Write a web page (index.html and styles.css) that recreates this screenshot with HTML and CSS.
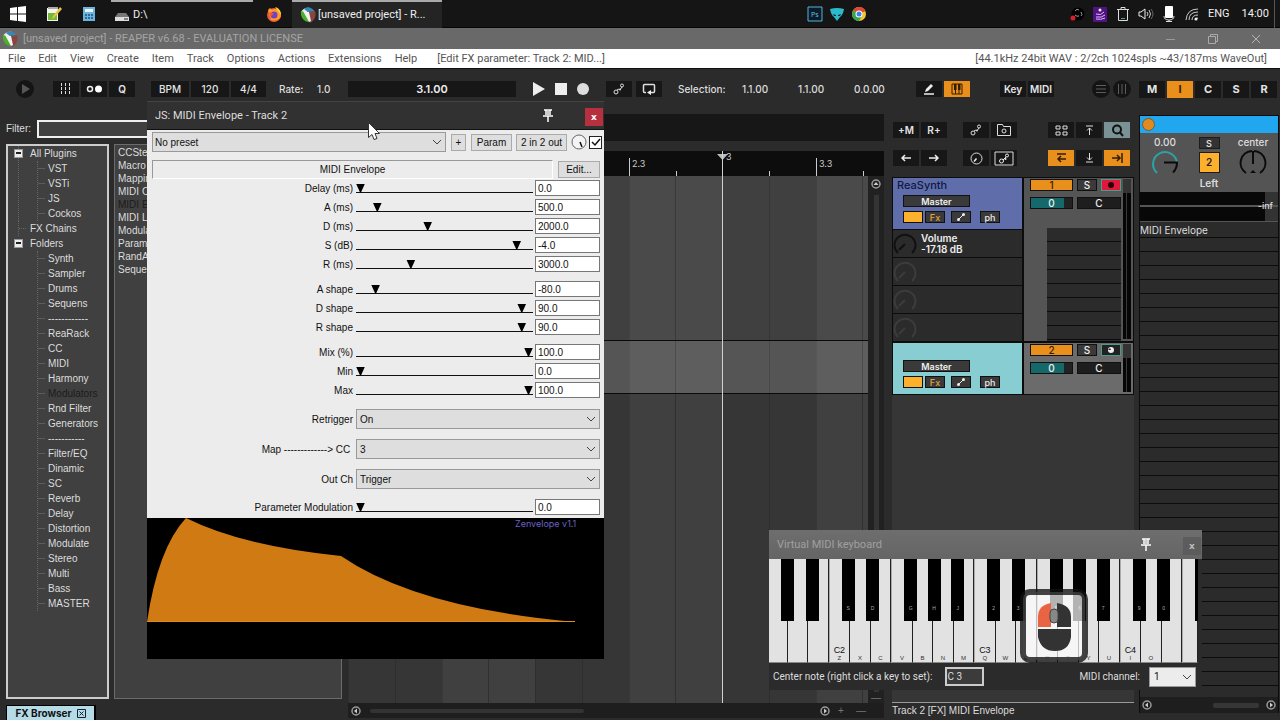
FILE: index.html
```html
<!DOCTYPE html>
<html lang="en">
<head>
<meta charset="utf-8">
<title>[unsaved project] - REAPER v6.68</title>
<link rel="stylesheet" href="styles.css">
</head>
<body>
<svg class="defs" aria-hidden="true">
  <symbol id="reaper" viewBox="0 0 16 16"><path d="M1 5C3 1 7 0 10 1L6 6z" fill="#e9e9e9"/><path d="M4 2c4-3 9-1 11 3L8 5z" fill="#3389b5"/><path d="M1 4l4 1 4 10C4 15 0 10 1 4z" fill="#4caf2c"/><path d="M6 5l9-1c2 5-1 10-5 12z" fill="#8a4440"/><path d="M3 4l6 1 2 9-2 1z" fill="#f2f2f2"/></symbol>
  <symbol id="pin" viewBox="0 0 12 14"><path d="M2 1h8M4 1v5M8 1v5M1 7h10M6 7v6" stroke="#fff" stroke-width="1.500" fill="none"/><path d="M5 2h2v4H5z" fill="#ccc"/></symbol>
  <symbol id="env" viewBox="0 0 12 12"><circle cx="3" cy="9" r="2" fill="none" stroke="#ddd"/><circle cx="9" cy="2.500" r="1.500" fill="none" stroke="#ddd"/><circle cx="7" cy="6.500" r="1" fill="#ddd"/><path d="M4 7l2-1M7.500 6L9 4" stroke="#ddd"/></symbol>
  <symbol id="envsmall" viewBox="0 0 8 8"><path d="M1 7l6-6" stroke="#eee"/><circle cx="1.500" cy="6.500" r="1.500" fill="#eee"/><circle cx="6.500" cy="1.500" r="1.500" fill="#eee"/></symbol>
  <symbol id="knob" viewBox="0 0 24 24"><path d="M5 21A10.500 10.500 0 1 1 19 21M12 12l-6 6" fill="none" stroke="currentColor" stroke-width="2"/></symbol>
  <symbol id="arrow" viewBox="0 0 10 10"><circle cx="5" cy="5" r="4" fill="none" stroke="#999" stroke-width="1.500"/><path d="M6 2.500v5L3 5z" fill="#ccc"/></symbol>
</svg>

<header class="taskbar">
  <svg class="ic win" viewBox="0 0 16 16"><path d="M0 2l7-1v6.500H0zM8 1l8-1v7.500H8zM0 8.500h7V15l-7-1zM8 8.500h8V16l-8-1z" fill="#fff"/></svg>
  <svg class="ic note" viewBox="0 0 16 16"><path d="M1 2h11v13H1z" fill="#f4f4ec"/><path d="M2 7h9v7H2z" fill="#74b83a"/><path d="M2 1h10v2H2z" fill="#aaa"/><path d="M14 1l2 2-8 9-2 1 1-3z" fill="#e3c63c"/></svg>
  <svg class="ic calc" viewBox="0 0 16 16"><path d="M2 1h12v14H2z" fill="#6eb3dc"/><path d="M4 3h8v3H4z" fill="#e6f5ff"/><path d="M4 8h2v2H4zM7 8h2v2H7zM10 8h2v2h-2zM4 11h2v2H4zM7 11h2v2H7zM10 11h2v2h-2z" fill="#2b6c9c"/></svg>
  <button class="task drive"><svg class="ic" viewBox="0 0 16 16"><path d="M4 6h8l3 4v3H1v-3z" fill="#777"/><path d="M1 10h14v4H1z" fill="#ddd"/><path d="M10 12h4" stroke="#222"/></svg>D:\</button>
  <svg class="ic fox" viewBox="0 0 16 16"><circle cx="8" cy="9" r="7" fill="#f3572f"/><path d="M2 4l2-2 2 2c4-3 9 1 9 6-2 5-8 5-10 4z" fill="#ff9b29"/><circle cx="8" cy="9" r="3.500" fill="#7042c4"/><path d="M9 1c4 1 6 4 6 8l-3-4z" fill="#ffd43a"/><path d="M3 7c2-1 4 0 5 1L5 10z" fill="#f3572f"/></svg>
  <button class="task active"><svg class="ic"><use href="#reaper"/></svg>[unsaved project] - R...</button>
  <div class="pinned">
    <svg class="ic" viewBox="0 0 16 16"><path d="M1 1h14v14H1z" fill="#0b1c28" stroke="#55b4dd"/><text x="4" y="11" class="ps">Ps</text></svg>
    <svg class="ic" viewBox="0 0 16 16"><path d="M1 3q7-2 14 0-1 6-4 8l-3 4-3-4Q2 9 1 3z" fill="#2bb9cb"/><path d="M4 8l3 1v1H5zM12 8L9 9v1h2z" fill="#06323a"/></svg>
    <svg class="ic" viewBox="0 0 16 16"><circle cx="8" cy="8" r="7" fill="#f5c52f"/><path d="M8 8L2 4.500A7 7 0 0 1 14.500 5z" fill="#de4735"/><path d="M8 8L2 4.500A7 7 0 0 0 8 15l3-5z" fill="#35a552"/><circle cx="8" cy="8" r="3.500" fill="#fff"/><circle cx="8" cy="8" r="2.500" fill="#3f7fe8"/></svg>
  </div>
  <div class="tray">
    <svg class="ic" viewBox="0 0 16 16"><circle cx="9" cy="8" r="6.500" fill="#000"/><path d="M6 5q2-3 4-1M12 6q2 3 0 4M6 9q2 2 4 1" stroke="#999" fill="none"/><circle cx="4" cy="12" r="2.500" fill="#d4202c"/></svg>
    <svg class="ic" viewBox="0 0 16 16"><path d="M1 1h14v15H1z" fill="#501383"/><path d="M4 8q5 2 8-2M4 11q6 1 9-2M4 13q5 1 9-1" stroke="#e3bdff" fill="none"/><circle cx="8" cy="4" r="1.500" fill="#eee"/></svg>
    <svg class="ic" viewBox="0 0 16 16"><path d="M3.500 3.500h9v11h-9zM2 3.500h12M6 3V1.500h4V3" stroke="#ddd" fill="none"/><path d="M6 12h4v1H6z" fill="#4aa0a0"/></svg>
    <svg class="ic" viewBox="0 0 16 16"><path d="M1 6h2l4-3v10l-4-3H1z" fill="none" stroke="#eee"/><path d="M9 6q2 2 0 4M11 4q3 4 0 8" fill="none" stroke="#ccc"/><path d="M13 3q4 5 0 10" fill="none" stroke="#666"/></svg>
    <svg class="ic" viewBox="0 0 16 16"><rect x="4" y="0" width="8" height="12" rx="1" fill="#fff"/><path d="M3 10q0 4 5 4t5-4M8 14v2M5 15.500h6" stroke="#ddd" fill="none"/></svg>
    <svg class="ic" viewBox="0 0 16 16"><path d="M2 14Q3 3 14 3M5 14q0-8 9-8M8 14q0-5 6-5M11 14q0-2 3-2" stroke="#ccc" fill="none"/><circle cx="12" cy="13" r="1.500" fill="#eee"/></svg>
    <span class="lang">ENG</span><time>14:00</time>
  </div>
</header>

<div class="titlebar">
  <svg class="ic"><use href="#reaper"/></svg>
  <h1>[unsaved project] - REAPER v6.68 - EVALUATION LICENSE</h1>
  <div class="wbtns">
    <button aria-label="Minimize"><svg viewBox="0 0 10 10"><path d="M1 5.500h9" stroke="#999"/></svg></button>
    <button aria-label="Restore"><svg viewBox="0 0 10 10"><path d="M.5 2.500h7v7h-7zM2.500 2.500v-2h7v7h-2" fill="none" stroke="#aaa"/></svg></button>
    <button aria-label="Close"><svg viewBox="0 0 10 10"><path d="M1 1l8 8M9 1L1 9" stroke="#b5b5b5"/></svg></button>
  </div>
</div>

<nav class="menubar">
  <button>File</button><button>Edit</button><button>View</button><button>Create</button><button>Item</button><button>Track</button><button>Options</button><button>Actions</button><button>Extensions</button><button>Help</button>
  <span class="last-action">[Edit FX parameter: Track 2: MID...]</span>
  <span class="audio">[44.1kHz 24bit WAV : 2/2ch 1024spls ~43/187ms WaveOut]</span>
</nav>

<section class="toolbar">
  <button class="round" aria-label="Play"><svg viewBox="0 0 18 18"><path d="M6 4l8 5-8 5z" fill="#555"/></svg></button>
  <div class="grp g1">
    <button class="b" aria-label="Grid"><svg width="14" height="12" viewBox="0 0 14 12"><path d="M2.500 0v12M6.500 0v12M10.500 0v12" stroke="#ddd" stroke-dasharray="3 1"/></svg></button>
    <button class="b" aria-label="Metronome"><svg width="17" height="10" viewBox="0 0 17 10"><circle cx="4" cy="5" r="2.500" fill="none" stroke="#eee" stroke-width="1.500"/><circle cx="12.500" cy="5" r="3.500" fill="#fff"/></svg></button>
    <button class="b">Q</button>
  </div>
  <div class="grp g2"><button class="b w38">BPM</button><button class="b w38">120</button><button class="b w35">4/4</button></div>
  <span class="rate">Rate:</span><span class="ratev">1.0</span>
  <output class="pos">3.1.00</output>
  <div class="transport">
    <button aria-label="Play"><svg viewBox="0 0 14 14"><path d="M1 0l12 7-12 7z" fill="#eee"/></svg></button>
    <button aria-label="Stop"><svg viewBox="0 0 14 14"><path d="M1 1h12v12H1z" fill="#eee"/></svg></button>
    <button aria-label="Record"><svg viewBox="0 0 14 14"><circle cx="7" cy="7" r="6" fill="#ddd"/></svg></button>
  </div>
  <div class="grp g3">
    <button class="b" aria-label="Envelopes"><svg width="12" height="12"><use href="#env"/></svg></button>
    <button class="b" aria-label="Repeat"><svg width="14" height="12" viewBox="0 0 14 12"><path d="M4 9.500H2.500q-1 0-1-1v-6q0-1 1-1h9q1 0 1 1v6q0 1-1 1H8" fill="none" stroke="#ddd" stroke-width="1.500"/><path d="M5 9.500l4-2.500v5z" fill="#eee"/></svg></button>
  </div>
  <span class="sel">Selection:</span>
  <span class="val">1.1.00</span><span class="val">1.1.00</span><span class="val">0.0.00</span>
  <div class="right">
    <div class="grp g4">
      <button class="b" aria-label="Edit"><svg width="12" height="12" viewBox="0 0 12 12"><path d="M2 9l1-3 5-5 2 2-5 5z" fill="#eee"/><path d="M1 11h10" stroke="#eee" stroke-width="1.500"/></svg></button>
      <button class="b on" aria-label="Piano roll"><svg width="12" height="12" viewBox="0 0 12 12"><path d="M1 1h10v10H1zM4.500 1v10M8 1v10" fill="none" stroke="#331d00"/><path d="M3 1h2.500v6H3zM7 1h2.500v6H7z" fill="#331d00"/></svg></button>
    </div>
    <div class="grp g5"><button class="b">Key</button><button class="b">MIDI</button></div>
    <div class="grp g6">
      <button class="round" aria-label="Rows"><svg viewBox="0 0 18 18"><path d="M4 5.500h10M4 9h10M4 12.500h10" stroke="#5c5c5c"/></svg></button>
      <button class="round" aria-label="Columns"><svg viewBox="0 0 18 18"><path d="M5.500 4v10M9 4v10M12.500 4v10" stroke="#5c5c5c"/></svg></button>
    </div>
    <div class="grp letters"><button class="b">M</button><button class="b on">I</button><button class="b">C</button><button class="b">S</button><button class="b">R</button></div>
  </div>
</section>

<main class="main">
  <aside class="browser">
    <div class="filter"><label for="filter">Filter:</label><input id="filter" type="text"></div>
    <div class="lists">
      <ul class="tree">
        <li class="top"><i class="box"></i>All Plugins
          <ul><li>VST</li><li>VSTi</li><li>JS</li><li>Cockos</li></ul></li>
        <li class="top leaf">FX Chains</li>
        <li class="top"><i class="box"></i>Folders
          <ul><li>Synth</li><li>Sampler</li><li>Drums</li><li>Sequens</li><li>------------</li><li>ReaRack</li><li>CC</li><li>MIDI</li><li>Harmony</li><li class="dim">Modulators</li><li>Rnd Filter</li><li>Generators</li><li>-----------</li><li>Filter/EQ</li><li>Dinamic</li><li>SC</li><li>Reverb</li><li>Delay</li><li>Distortion</li><li>Modulate</li><li>Stereo</li><li>Multi</li><li>Bass</li><li>MASTER</li></ul></li>
      </ul>
      <ul class="plugins"><li>CCStep</li><li>Macro</li><li>Mapping</li><li>MIDI C</li><li class="dim">MIDI E</li><li>MIDI L</li><li>Modula</li><li>Parame</li><li>RandA</li><li>Sequen</li></ul>
    </div>
    <button class="tab">FX Browser <svg width="9" height="9" viewBox="0 0 9 9"><path d="M.5.5h8v8h-8zM2.500 2.500l4 4M6.500 2.500l-4 4" fill="none" stroke="#123"/></svg></button>
  </aside>

  <section class="arrange">
    <div class="overview"></div>
    <svg class="ruler">
      <path d="M281.500 7v18M468.500 7v18M328.500 20v5M421.500 20v5M515.500 20v5" stroke="#ccc"/>
      <text x="284" y="16">2.3</text><text x="471" y="16">3.3</text><text x="378" y="9">3</text>
      <path d="M369 3h11l-5.500 6z" fill="#bbb"/>
    </svg>
    <div class="canvas">
      <div class="lanes"><div class="lane l1"></div><div class="lane l2"></div><div class="lane l3"></div></div>
      <div class="vscroll"><svg class="sa up"><use href="#arrow"/></svg><i></i><b>—</b></div>
    </div>
    <div class="hscroll"><svg class="sa"><use href="#arrow"/></svg><i></i><svg class="sa flip"><use href="#arrow"/></svg><b>+</b><b>—</b></div>
    <div class="playhead"></div>
  </section>

  <section class="tcp">
    <div class="tools">
      <div class="grp"><button class="b">+M</button><button class="b">R+</button></div>
      <div class="grp">
        <button class="b" aria-label="Envelope"><svg width="12" height="12"><use href="#env"/></svg></button>
        <button class="b" aria-label="Snapshot"><svg width="14" height="12" viewBox="0 0 14 12"><path d="M.5 11.500V.5h5l1 2h7v9z" fill="none" stroke="#ddd"/><circle cx="7" cy="7" r="2" fill="none" stroke="#ddd"/></svg></button>
      </div>
      <div class="grp last">
        <button class="b" aria-label="Group"><svg width="13" height="11" viewBox="0 0 13 11"><path d="M1 1h4v3H1zM8 1h4v3H8zM1 7h4v3H1zM8 7h4v3H8z" fill="none" stroke="#ddd"/></svg></button>
        <button class="b" aria-label="Top"><svg width="9" height="10" viewBox="0 0 9 10"><path d="M1 1h7M4.500 10V3M2 5.500L4.500 3 7 5.500" fill="none" stroke="#ddd"/></svg></button>
        <button class="b find" aria-label="Find"><svg width="13" height="13" viewBox="0 0 13 13"><circle cx="6" cy="5.500" r="4" fill="none" stroke="#111" stroke-width="2"/><path d="M9 8.500l3 3.500" stroke="#111" stroke-width="2"/></svg></button>
      </div>
      <div class="grp">
        <button class="b" aria-label="Previous"><svg width="10" height="8" viewBox="0 0 10 8"><path d="M10 4H1M4 1L1 4l3 3" fill="none" stroke="#eee" stroke-width="1.500"/></svg></button>
        <button class="b" aria-label="Next"><svg width="10" height="8" viewBox="0 0 10 8"><path d="M0 4h9M6 1l3 3-3 3" fill="none" stroke="#eee" stroke-width="1.500"/></svg></button>
      </div>
      <div class="grp">
        <button class="b" aria-label="Knob"><svg width="13" height="13" viewBox="0 0 13 13"><circle cx="6.500" cy="6.500" r="5.500" fill="none" stroke="#ddd"/><path d="M6.500 6.500L4 9.500" stroke="#eee" stroke-width="1.500"/></svg></button>
        <button class="b" aria-label="Envelope lane"><svg width="20" height="15" viewBox="0 0 20 15"><path d="M1 1h18v13H1z" fill="none" stroke="#ddd"/><circle cx="7.500" cy="10" r="2" fill="none" stroke="#eee"/><circle cx="13" cy="4.500" r="1.500" fill="none" stroke="#eee"/><circle cx="11.500" cy="8" r="1" fill="#eee"/><path d="M9 9l3-3" stroke="#eee"/></svg></button>
      </div>
      <div class="grp last">
        <button class="b on" aria-label="Left"><svg width="10" height="10" viewBox="0 0 10 10"><path d="M1 1h9M10 6H2M5 3L2 6l3 3" fill="none" stroke="#331d00" stroke-width="1.500"/></svg></button>
        <button class="b" aria-label="Bottom"><svg width="9" height="10" viewBox="0 0 9 10"><path d="M1 9h7M4.500 0v7M2 4.500L4.500 7 7 4.500" fill="none" stroke="#ddd"/></svg></button>
        <button class="b on" aria-label="End"><svg width="11" height="10" viewBox="0 0 11 10"><path d="M0 5h8M5 2l3 3-3 3M10 0v10" fill="none" stroke="#331d00" stroke-width="1.500"/></svg></button>
      </div>
    </div>
    <div class="track t1">
      <div class="left">
        <div class="panel"><span class="name">ReaSynth</span><button class="master">Master</button>
          <div class="fx"><button class="amber" aria-label="FX on"></button><button class="fxb">Fx</button><button class="gapped" aria-label="Envelope"><svg width="8" height="8"><use href="#envsmall"/></svg></button><button class="ph">ph</button></div></div>
        <div class="param live"><svg class="kn"><use href="#knob"/></svg><p>Volume<br>-17.18 dB</p></div>
        <div class="param"><svg class="kn"><use href="#knob"/></svg></div>
        <div class="param"><svg class="kn"><use href="#knob"/></svg></div>
        <div class="param"><svg class="kn"><use href="#knob"/></svg></div>
      </div>
      <div class="ctl">
        <div class="cells"><button class="num">1</button><button>S</button><button class="rec" aria-label="Record arm"><svg width="8" height="8" viewBox="0 0 8 8"><circle cx="4" cy="4" r="3" fill="#220008"/></svg></button><button class="vol">0</button><button class="pan">C</button></div>
        <div class="sends"></div>
      </div>
      <div class="meter"></div>
    </div>
    <div class="track t2">
      <div class="left">
        <div class="panel"><span class="name"></span><button class="master">Master</button>
          <div class="fx"><button class="amber" aria-label="FX on"></button><button class="fxb">Fx</button><button class="gapped" aria-label="Envelope"><svg width="8" height="8"><use href="#envsmall"/></svg></button><button class="ph">ph</button></div></div>
      </div>
      <div class="ctl">
        <div class="cells"><button class="num">2</button><button>S</button><button class="mon" aria-label="Record arm"><svg width="8" height="8" viewBox="0 0 8 8"><circle cx="4" cy="4" r="3" fill="#eee"/><path d="M4 4h-3l2-2z" fill="#222"/></svg></button><button class="vol">0</button><button class="pan">C</button></div>
      </div>
      <div class="meter"></div>
    </div>
    <div class="void"></div>
    <p class="status">Track 2 [FX] MIDI Envelope</p>
  </section>

  <section class="mixer">
    <div class="head"><i></i></div>
    <div class="knobs">
      <div class="kcol"><span>0.00</span><svg viewBox="0 0 28 28"><path d="M6 24A12 12 0 1 1 26 14" fill="none" stroke="#2ba3a4" stroke-width="2"/><path d="M13 13.500h13q0 6-4 10" fill="none" stroke="#0b0b0b" stroke-width="2"/></svg></div>
      <div class="kmid"><button>S</button><button class="two">2</button><span>Left</span></div>
      <div class="kcol"><span>center</span><svg viewBox="0 0 28 28"><path d="M7 24A12 12 0 0 1 13 2M15 2A12 12 0 0 1 21 24M14 2v13" fill="none" stroke="#0b0b0b" stroke-width="2"/><path d="M14 21l3 3h-6z" fill="#0b0b0b"/></svg></div>
    </div>
    <div class="mmeter"><span>-inf</span></div>
    <p class="insert">MIDI Envelope</p>
    <div class="slots"></div>
    <div class="mscroll"><svg class="sa"><use href="#arrow"/></svg><i></i><svg class="sa flip"><use href="#arrow"/></svg></div>
  </section>
</main>

<section class="window plugin">
  <div class="wtitle"><h2>JS: MIDI Envelope - Track 2</h2><svg class="pin"><use href="#pin"/></svg><button class="close">x</button></div>
  <div class="pbody">
    <div class="prow">
      <select aria-label="Preset"><option>No preset</option></select>
      <button>+</button><button class="par">Param</button><button class="io">2 in 2 out</button>
      <svg class="mini" viewBox="0 0 16 16"><circle cx="8" cy="8" r="7" fill="#f4f4f4" stroke="#666"/><path d="M9 8l2 5" stroke="#111" stroke-width="1.500"/></svg>
      <input type="checkbox" checked aria-label="Enabled">
    </div>
    <div class="prow name-row"><div class="pname">MIDI Envelope</div><button class="edit">Edit...</button></div>
    <div class="params first">
      <label for="p1">Delay (ms)</label><input id="p1" type="range" value="0"><input type="text" value="0.0" aria-label="Delay value">
      <label for="p2">A (ms)</label><input id="p2" type="range" value="10"><input type="text" value="500.0" aria-label="A value">
      <label for="p3">D (ms)</label><input id="p3" type="range" value="40"><input type="text" value="2000.0" aria-label="D value">
      <label for="p4">S (dB)</label><input id="p4" type="range" value="93"><input type="text" value="-4.0" aria-label="S value">
      <label for="p5">R (ms)</label><input id="p5" type="range" value="30"><input type="text" value="3000.0" aria-label="R value">
    </div>
    <div class="params">
      <label for="p6">A shape</label><input id="p6" type="range" value="9"><input type="text" value="-80.0" aria-label="A shape value">
      <label for="p7">D shape</label><input id="p7" type="range" value="96"><input type="text" value="90.0" aria-label="D shape value">
      <label for="p8">R shape</label><input id="p8" type="range" value="96"><input type="text" value="90.0" aria-label="R shape value">
    </div>
    <div class="params">
      <label for="p9">Mix (%)</label><input id="p9" type="range" value="100"><input type="text" value="100.0" aria-label="Mix value">
      <label for="p10">Min</label><input id="p10" type="range" value="0"><input type="text" value="0.0" aria-label="Min value">
      <label for="p11">Max</label><input id="p11" type="range" value="100"><input type="text" value="100.0" aria-label="Max value">
    </div>
    <div class="combos">
      <label for="c1">Retrigger</label><select id="c1"><option>On</option></select>
      <label for="c2">Map -------------&gt; CC&nbsp;</label><select id="c2"><option>3</option></select>
      <label for="c3">Out Ch</label><select id="c3"><option>Trigger</option></select>
    </div>
    <div class="params">
      <label for="p12">Parameter Modulation</label><input id="p12" type="range" value="0"><input type="text" value="0.0" aria-label="Modulation value">
    </div>
  </div>
  <svg class="graph" viewBox="0 0 457 141">
    <path d="M0 104Q11 30 39 0 95 28 194 38 270 90 428 104z" fill="#cf7a12"/>
    <path d="M0 103.500h428" stroke="#e08a20"/>
    <text x="368" y="9">Zenvelope v1.1</text>
  </svg>
</section>

<section class="window vkb">
  <div class="wtitle"><h2>Virtual MIDI keyboard</h2><svg class="pin"><use href="#pin"/></svg><button class="close">x</button></div>
  <div class="keys">
    <div class="k k0"><i class="c"></i></div><div class="k"><i class="a"></i></div><div class="k"></div>
    <div class="k n"><i class="c">S</i><b>C2</b><span>Z</span></div><div class="k"><i class="d">D</i><span>X</span></div><div class="k"><span>C</span></div><div class="k n"><i class="c">G</i><span>V</span></div><div class="k"><i class="g">H</i><span>B</span></div><div class="k"><i class="a">J</i><span>N</span></div><div class="k"><span>M</span></div>
    <div class="k n"><i class="c">2</i><b>C3</b><span>Q</span></div><div class="k"><i class="d">3</i><span>W</span></div><div class="k"><span>E</span></div><div class="k n"><i class="c">5</i><span>R</span></div><div class="k"><i class="g">6</i><span>T</span></div><div class="k"><i class="a">7</i><span>Y</span></div><div class="k"><span>U</span></div>
    <div class="k n"><i class="c">9</i><b>C4</b><span>I</span></div><div class="k"><i class="d">0</i><span>O</span></div><div class="k"></div><div class="k k9 n"><i class="c"></i></div>
  </div>
  <div class="vfoot">
    <label for="cn">Center note (right click a key to set):</label><input id="cn" type="text" value="C 3">
    <label class="ch" for="mc">MIDI channel:</label><select id="mc"><option>1</option></select>
  </div>
</section>

<svg class="mouse" viewBox="0 0 68 74">
  <rect x="3" y="3" width="62" height="68" rx="7" fill="#fff" fill-opacity=".7" stroke="#111" stroke-opacity=".78" stroke-width="6"/>
  <path d="M31 14v24H18V28Q18 16 31 14z" fill="#e96443"/><path d="M37 14q14 2 14 14v10H37zM18 40h33v8q-2 14-16 14T18 48z" fill="#333"/><rect x="30" y="20" width="8" height="14" rx="4" fill="#888" stroke="#444"/>
</svg>
<svg class="cursor" viewBox="0 0 12 18"><path d="M.5.5v15l3.500-3 2 5 3-1-2-5h4.500z" fill="#fff" stroke="#333"/></svg>
</body>
</html>
```
FILE: styles.css
```css
* { box-sizing: border-box; }
body { margin: 0; height: 100vh; min-height: 720px; display: flex; flex-direction: column; overflow: hidden; background: #2b2b2b; color: #ddd; font: 10px "Liberation Sans", Arial, sans-serif; position: relative; }
button, input, select { font: inherit; color: inherit; margin: 0; padding: 0; border: 0; background: none; border-radius: 0; appearance: none; }
button { display: flex; align-items: center; justify-content: center; white-space: nowrap; }
h1, h2, p, ul { margin: 0; padding: 0; font-weight: normal; list-style: none; }
.defs { position: absolute; width: 0; height: 0; }
.ic { width: 16px; height: 16px; flex: none; }

.taskbar { height: 28px; flex: none; display: flex; align-items: center; background: #151515; color: #eee; font: 11px Roboto, sans-serif; padding-left: 10px; border-bottom: 1px solid #050505; }
.note { margin-left: 20px; }
.calc { margin-left: 19px; }
.task { height: 28px; border-top: 2px solid #aaa; gap: 3px; justify-content: flex-start; }
.drive { width: 142px; margin-left: 14px; padding-left: 3px; }
.fox { margin: 0 10px 0 13px; }
.active { width: 150px; background: #242424; padding-left: 8px; gap: 2px; }
.pinned { display: flex; gap: 6px; margin-left: auto; }
.ps { font: 7px "Open Sans", sans-serif; fill: #6cc6ec; }
.tray { display: flex; align-items: center; gap: 7px; margin-left: 202px; padding-right: 5px; margin-right: 5px; height: 28px; border-right: 1px solid #555; }
.lang { margin: 0 5px 0 1px; }

.titlebar { height: 21px; flex: none; display: flex; align-items: center; background: #696969; color: #a5a5a5; padding-left: 2px; }
.titlebar h1 { font: 11px Roboto, sans-serif; margin-left: 5px; }
.wbtns { margin-left: auto; display: flex; gap: 33px; padding-right: 19px; }
.wbtns svg { width: 10px; height: 10px; display: block; }
.menubar { height: 20px; flex: none; display: flex; align-items: center; gap: 13px; background: #fff; color: #555; font: 11px Roboto, sans-serif; padding: 0 13px 0 8px; border-bottom: 1px solid #111; white-space: nowrap; }
.last-action { margin-left: 7px; }
.audio { margin-left: auto; }

.toolbar { height: 40px; flex: none; display: flex; align-items: center; padding: 0 3px 0 16px; font: 500 10px Inter, sans-serif; white-space: nowrap; }
.grp { display: flex; gap: 2px; }
.b { width: 26px; height: 16px; background: #171717; color: #e4e4e4; font: 600 10px Inter, sans-serif; }
.on { background: #e98f1c; color: #331d00; }
.round { width: 18px; height: 18px; border-radius: 9px; background: #141414; }
.round svg { width: 18px; height: 18px; }
.g1 { margin-left: 19px; }
.g2 { margin-left: 16px; }
.g2 .b { font-weight: 500; }
.w38 { width: 38px; }
.w35 { width: 35px; }
.rate { width: 38px; margin-left: 13px; }
.ratev { width: 31px; }
.pos { flex: 1; max-width: 168px; height: 16px; background: #171717; text-align: center; font: 600 11px/16px Inter, sans-serif; color: #eee; }
.transport { display: flex; gap: 8px; margin-left: 16px; }
.transport svg { width: 14px; height: 14px; }
.g3 { margin-left: 16px; gap: 4px; }
.sel { width: 64px; margin-left: 16px; }
.val { width: 56px; }
.right { display: flex; align-items: center; margin-left: auto; }
.g5 { margin-left: 30px; }
.g6 { margin-left: 38px; gap: 3px; }
.letters { margin-left: 8px; }
.letters .b { font-size: 11px; font-weight: 700; height: 17px; }

.main { flex: 1; min-height: 0; display: flex; }
.dim { color: #1c1c1c; }
.browser { width: 342px; flex: none; display: flex; flex-direction: column; padding: 11px 0 0 6px; }
.filter { display: flex; align-items: center; height: 17px; }
.filter label { width: 31px; }
.filter input { flex: 1; height: 18px; border: 2px solid #eee; background: #404040; }
.lists { display: flex; gap: 5px; flex: 1; margin-top: 7px; min-height: 0; }
.tree { width: 103px; border: 2px solid #ccc; background: #404040; line-height: 15px; }
.top { position: relative; padding-left: 22px; }
.top::before { content: ""; position: absolute; left: 10px; top: 0; height: 100%; border-left: 1px dotted #666; }
.top:last-child::before { display: none; }
.leaf::after { content: ""; position: absolute; left: 11px; top: 7px; width: 7px; border-top: 1px dotted #666; }
.box { position: absolute; left: 6px; top: 3px; width: 9px; height: 9px; background: #eee; border: 1px solid #999; }
.box::after { content: ""; position: absolute; left: 1px; top: 2px; width: 5px; height: 2px; background: #222; }
.top ul { margin-left: 7px; border-left: 1px dotted #666; }
.top ul li { padding-left: 10px; background: linear-gradient(90deg, #5c5c5c 7px, transparent 7px) 0 7px / 100% 1px no-repeat; }
.plugins { flex: 1; border: 1px solid #6b6b6b; background: #404040; line-height: 13px; padding: 1px 3px; }
.tab { width: 90px; height: 15px; margin-top: 6px; background: #b5dbe6; color: #111; border: solid #000; border-width: 1px 2px 0 1px; font: 700 10px Inter, sans-serif; gap: 5px; }

.arrange { flex: 1; min-width: 0; margin-left: 6px; display: flex; flex-direction: column; position: relative; padding-bottom: 2px; }
.overview { height: 27px; margin-top: 5px; flex: none; background: #171717; }
.ruler { display: block; width: 100%; height: 25px; margin-top: 10px; flex: none; background: #0d0d0d; }
.ruler text { font: 9px Inter, sans-serif; fill: #ccc; }
.canvas { flex: 1; display: flex; min-height: 0; }
.lanes { flex: 1; display: flex; flex-direction: column; }
.lane { background: linear-gradient(90deg, rgba(0,0,0,.15) 1px, transparent 1px 47px, rgba(0,0,0,.15) 47px 48px, transparent 48px 94px, rgba(255,255,255,.01) 94px 95px, rgba(255,255,255,.05) 95px 140px, rgba(0,0,0,.1) 140px 141px, rgba(255,255,255,.05) 141px) 0 0 / 187px 100% #404040; }
.l1 { height: 165px; border-bottom: 1px solid #0a0a0a; }
.l2 { height: 53px; background-color: #555; border-bottom: 1px solid #0a0a0a; }
.l3 { flex: 1; background-color: #363636; }
.vscroll { width: 16px; background: #212121; display: flex; flex-direction: column; align-items: center; padding-top: 3px; }
.vscroll i { flex: 1; width: 5px; margin-top: 6px; background: #343434; }
.vscroll b, .hscroll b { color: #777; font-weight: normal; }
.sa { width: 10px; height: 10px; flex: none; }
.up { transform: rotate(90deg); }
.flip { transform: rotate(180deg); }
.hscroll { height: 15px; flex: none; background: #1e1e1e; display: flex; align-items: center; padding: 0 18px 0 3px; }
.hscroll i { width: 214px; height: 4px; border-radius: 2px; background: #333; margin: 0 auto 0 9px; }
.hscroll b { width: 10px; margin-left: 8px; }
.playhead { position: absolute; left: 374px; top: 42px; bottom: 17px; width: 1px; background: #d0d0d0; }

.tcp { width: 242px; flex: none; margin-left: 8px; display: flex; flex-direction: column; font: 500 10px Inter, sans-serif; }
.tools { display: grid; grid-template-columns: 54px 54px 1fr; gap: 12px 16px; padding: 13px 4px 11px 1px; }
.tools .last { justify-content: flex-end; }
.find { background: #7a9296; }
.track { display: flex; border: 1px solid #0c0c0c; background: #555; }
.track button { height: 12px; background: #3a3a3a; border: 1px solid #111; color: #eee; font-size: 10px; }
.t2 { background: #6b6b6b; }
.left { width: 131px; flex: none; background: #2b2b2b; border-right: 2px solid #0c0c0c; }
.panel { height: 51px; background: #5f6eab; padding: 1px 0 0 4px; }
.t2 .panel { background: #87cdd1; }
.name { display: block; height: 16px; line-height: 13px; color: #111840; font-size: 11px; }
.track .master { width: 67px; margin-left: 6px; font-size: 9px; font-weight: 600; }
.fx { display: flex; gap: 2px; margin: 4px 0 0 6px; }
.fx button { width: 20px; }
.track .amber { background: #fdb02c; }
.track .fxb { color: #e9a23a; font-size: 9px; }
.track .gapped { margin-left: 4px; }
.track .ph { margin-left: 7px; font-size: 9px; }
.param { height: 28px; border-top: 1px solid #0c0c0c; display: flex; align-items: center; gap: 4px; color: #3c3c3c; }
.live { color: #111; }
.param p { color: #eee; font-weight: 600; line-height: 11px; }
.kn { width: 24px; height: 24px; flex: none; }
.ctl { width: 98px; flex: none; display: flex; flex-direction: column; }
.cells { display: grid; grid-template-columns: 43px 20px 20px; gap: 6px 4px; padding: 1px 0 0 6px; height: 50px; align-content: start; }
.track .num { background: #e98f1c; color: #331d00; }
.track .rec { background: #e0173c; border-color: #4c9c8c; }
.track .mon { background: #222; border-color: #4c9c8c; }
.track .vol { background: linear-gradient(90deg, #16696a 80%, #222 80%); }
.track .pan { grid-column: span 2; background: #1e1e1e; }
.sends { flex: 1; margin-left: 23px; margin-right: 1px; background: repeating-linear-gradient(#2b2b2b 0 13px, #0c0c0c 13px 14px); }
.meter { width: 8px; margin: 1px 2px 2px auto; background: linear-gradient(#333 14px, transparent 14px), linear-gradient(90deg, #060606 3px, #3a3a3a 3px 4px, #060606 4px); }
.void { flex: 1; background: #363636; border-bottom: 1px solid #999; }
.status { height: 17px; font: 10px/16px "Liberation Sans", Arial, sans-serif; }

.mixer { width: 140px; flex: none; margin: 6px 1px 7px 5px; border: 1px solid #0c0c0c; border-width: 1px 1px 0; display: flex; flex-direction: column; font: 500 10px Inter, sans-serif; }
.head { height: 17px; flex: none; background: #20a7ef; padding: 2px; }
.head i { display: block; width: 13px; height: 13px; border-radius: 7px; background: #e08b22; border: 1px solid #7a5a30; }
.knobs { height: 59px; flex: none; background: #545454; display: grid; grid-template-columns: 50px 1fr 50px; padding-top: 3px; line-height: 13px; }
.kcol { display: flex; flex-direction: column; align-items: center; }
.kcol svg { width: 28px; height: 28px; }
.kmid { display: flex; flex-direction: column; align-items: center; font-weight: 600; }
.kmid button { width: 21px; height: 12px; background: #333; border: 1px solid #1c1c1c; margin-top: 1px; font-size: 9px; }
.kmid .two { height: 21px; margin: 3px 0 4px; background: #fdb02c; color: #222; font-size: 10px; }
.mmeter { height: 30px; flex: none; background: linear-gradient(#0000 13px, #555 13px 15px, #0000 15px), linear-gradient(90deg, #080808 125px, #333 125px); border-bottom: 1px solid #555; text-align: right; padding: 7px 5px 0 0; font-size: 9px; line-height: 13px; }
.insert { height: 16px; line-height: 16px; flex: none; border-bottom: 1px solid #0c0c0c; }
.slots { flex: 1; background: repeating-linear-gradient(#2b2b2b 0 13px, #0c0c0c 13px 14px); }
.mscroll { height: 16px; flex: none; background: #1e1e1e; display: flex; align-items: center; justify-content: space-between; padding: 0 2px; }
.mscroll i { width: 46px; height: 5px; border-radius: 2px; background: #363636; margin-left: 54px; }

.window { position: absolute; display: flex; flex-direction: column; }
.wtitle { height: 29px; flex: none; display: flex; align-items: center; }
.wtitle h2 { font: 11px Roboto, sans-serif; flex: 1; padding-left: 8px; }
.pin { width: 12px; height: 14px; }
.close { width: 18px; height: 18px; margin-top: 3px; font: 700 9px "DejaVu Sans", sans-serif; }
.plugin { left: 147px; top: 101px; width: 457px; background: #ececec; color: #111; }
.plugin .wtitle { background: #313131; color: #ddd; border-top: 1px solid #444; border-bottom: 1px solid #111; }
.plugin .close { background: #b6303f; color: #fff; margin-left: 31px; margin-right: 1px; }
.pbody { padding: 2px 4px 3px 5px; }
.prow { display: flex; align-items: center; height: 20px; }
select { appearance: none; background: #dedede url("data:image/svg+xml,%3Csvg xmlns='http://www.w3.org/2000/svg' width='10' height='6'%3E%3Cpath d='M1 1l4 4 4-4' fill='none' stroke='%23444'/%3E%3C/svg%3E") right 3px center no-repeat; border: 1px solid #999; }
.prow select { width: 294px; height: 20px; padding-left: 2px; }
.prow button { height: 17px; width: 15px; margin-left: 5px; background: #dedede; border: 1px solid #aaa; }
.prow .par { width: 41px; }
.prow .io { width: 51px; margin-left: 4px; }
.mini { width: 16px; height: 16px; margin-left: 4px; flex: none; }
.prow input { width: 13px; height: 13px; margin: 0 -4px 0 2px; flex: none; border: 1px solid #222; background: #fff url("data:image/svg+xml,%3Csvg xmlns='http://www.w3.org/2000/svg' width='11' height='11'%3E%3Cpath d='M2 5l3 3 5-6' fill='none' stroke='%23111' stroke-width='1.5'/%3E%3C/svg%3E") center no-repeat; }
.name-row { margin-top: 7px; }
.pname { flex: 1; height: 19px; line-height: 18px; text-align: center; border: 1px solid #999; border-color: #999 #fff #fff #999; }
.name-row .edit { width: 42px; }
.params { display: grid; grid-template-columns: 1fr 177px 65px; column-gap: 2px; row-gap: 3px; margin-bottom: 9px; align-items: center; }
.first { margin-top: 1px; }
.params label, .combos label { text-align: right; padding-right: 1px; }
.params [type="text"] { height: 16px; border: 1px solid #777; background: #fff; padding-left: 2px; min-width: 0; width: 100%; }
[type="range"] { appearance: none; width: 100%; height: 16px; background: linear-gradient(#111, #111) 0 12px / 100% 1px no-repeat; }
[type="range"]::-webkit-slider-thumb { appearance: none; width: 9px; height: 9px; background: #000; clip-path: polygon(0 0, 100% 0, 55% 100%, 45% 100%); }
.combos { display: grid; grid-template-columns: 1fr 244px; column-gap: 2px; row-gap: 10px; align-items: center; margin: 11px 0 10px; }
.combos select { height: 20px; padding-left: 3px; }
.params:last-child { margin-bottom: 0; }
.graph { display: block; width: 100%; background: #000; }
.graph text { font: 9px Inter, sans-serif; fill: #6a62c8; }

.vkb { right: 78px; bottom: 30px; width: 433px; background: #2b2b2b; }
.vkb .wtitle { background: linear-gradient(#6e6e6e, #656565); color: #a0a0a0; }
.vkb .close { background: #5c5c5c; color: #bbb; margin-left: 31px; margin-right: 1px; }
.keys { display: flex; height: 104px; margin-right: 4px; overflow: hidden; isolation: isolate; background: #e2e2e2; }
.k { flex: 21; position: relative; color: #333; font-size: 6px; text-align: center; display: flex; flex-direction: column; justify-content: flex-end; padding-bottom: 1px; border-right: 1px solid #222; border-bottom: 1px solid #888; background: #e2e2e2; }
.k.n { border-left: 1px solid #aaa; }
.k0 { flex: 19; }
.k9 { flex: 15; }
.k b { font: 9px "Liberation Sans", sans-serif; color: #111; }
.k i { position: absolute; z-index: 1; top: 0; width: 13px; height: 62px; background: #000; color: #aaa; font: 5px/98px "Liberation Sans", sans-serif; text-align: center; }
.k .c { left: 12px; }
.k .d { left: 16px; }
.k .g { left: 15px; }
.k .a { left: 18px; }
.vfoot { height: 27px; display: flex; align-items: center; padding: 0 6px 0 4px; font: 10px Roboto, sans-serif; }
.vfoot input { width: 39px; height: 19px; margin-left: 13px; border: 2px solid #ccc; background: #3b3b3b; }
.vfoot .ch { margin-left: auto; margin-right: 9px; }
.vfoot select { width: 47px; height: 20px; color: #111; background-color: #ececec; padding-left: 4px; }
.mouse { position: absolute; right: 192px; bottom: 57px; width: 68px; height: 74px; }
.cursor { position: absolute; left: 368px; top: 122px; width: 12px; height: 18px; }
```
